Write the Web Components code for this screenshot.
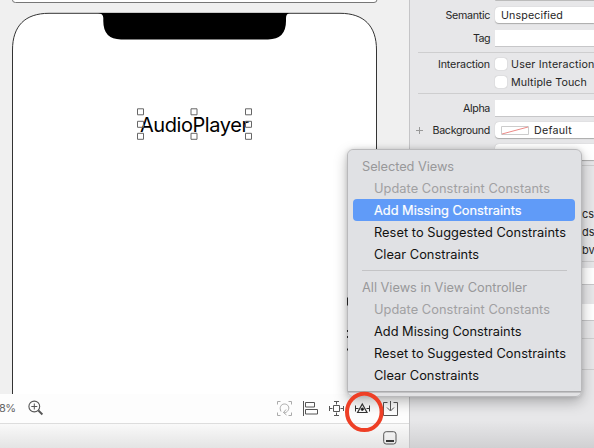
<!DOCTYPE html>
<html lang="en"><head><meta charset="utf-8"><title>Interface Builder</title>
<style>html,body{margin:0;width:594px;height:448px;overflow:hidden;font-family:Inter,"Liberation Sans",sans-serif}</style></head>
<body><ib-window></ib-window>
<script>
function define(name, html, init){
  customElements.define(name, class extends HTMLElement{
    connectedCallback(){
      if(this.shadowRoot) return;
      const t=document.createElement('template'); t.innerHTML=html;
      this.attachShadow({mode:'open'}).append(t.content.cloneNode(true));
      if(init) init(this,this.shadowRoot);
    }
  });
}
/* Text whose tracking is adjusted to span a given width */
define('fit-text','<style>:host{display:inline-block;white-space:pre}</style><span><slot></slot></span>',(h,r)=>{
  const w=+h.getAttribute('w'); if(!w) return;
  const s=r.querySelector('span');
  const n=h.textContent.length;
  s.style.letterSpacing=((w-s.getBoundingClientRect().width)/n)+'px';
});
define('ib-device',`<style>:host{display:block;position:relative;height:394px;background:#f0f0f0;overflow:hidden}
svg{position:absolute;inset:0}
fit-text{position:absolute;left:140px;top:111px;font-size:20px;font-weight:380;line-height:28px;color:#000}</style>
<svg width="409" height="394" fill="none">
<path d="M12.500-4V0q0 2.500 3 2.500H374q3 0 3-3V-4" fill="#fff" stroke="#777"/>
<path d="M12.500 396V50C12.500 26 25 13.300 49 13.300H340C364 13.300 376.500 26 376.500 50V396" fill="#fff" stroke="#333" stroke-width="1"/>
<path d="M98 13H290Q286 13.600 286 18V21Q286 39.400 268 39.400H121Q103.300 39.400 103.300 21V18Q103.300 13.600 98 13Z" fill="#000"/></svg>
<fit-text w="108.500">AudioPlayer</fit-text>
<svg width="409" height="394" fill="#fff" stroke="#666" stroke-width="1"><path d="M137.500 108.800h6v6h-6zM191 108.800h6v6h-6zM245.500 108.800h6v6h-6zM137.500 133.300h6v6h-6zM191 133.300h6v6h-6zM245.500 133.300h6v6h-6z"/><path fill="none" d="M137.500 121.300h6v6h-6zM245.500 121.300h6v6h-6z"/></svg>`);
define('ib-toolbar',`<style>:host{display:flex;height:30px;box-sizing:border-box;padding-bottom:1px;background:#fdfdfd;border-bottom:1px solid #ddd;align-items:center}
.p{font-size:11px;color:#666;width:28px;margin-left:-1px}.sp{flex:1}.icons{display:flex;margin-right:9px}svg{display:block;fill:none;stroke:#555;stroke-width:1}</style>
<span class="p"><fit-text w="16.500">8%</fit-text></span>
<svg width="18" height="18" style="margin-left:-1px"><g stroke="#555"><circle cx="8.300" cy="7.500" r="5.400" stroke-width="1.100"/><path d="M5.300 7.500h6M8.300 4.500v6"/><path d="M12.400 11.500l4 4" stroke-width="1.800"/></g></svg>
<span class="sp"></span><div class="icons"><svg width="124" height="20" viewBox="276 398 124 20">
<g stroke="#aaa"><path d="M277.500 404.500v-3h3M288.500 401.500h3v3M277.500 412.500v3h3M288.500 415.500h3v-3"/><path d="M281 411.500c-2-4 0-7.500 3.500-7.500s5.500 3.500 3.500 6.500-4.500 2-4.500 2M286 409.500l-2.500 3 3 2.500"/></g>
<path d="M303.500 401v15M305.500 402.500h9v4.500h-9zM305.500 409.500h12v4.500h-12z"/>
<path d="M333.500 405.500h6v6h-6zM336.500 401.500v3M334 401.500h5M336.500 412.500v3M334 415.500h5M329.500 406v5M329.500 408.500h3M343.500 406v5M343.500 408.500h-3"/>
<g stroke="#333"><path d="M362.300 404l4.700 8.500h-9.400z" stroke-width="1.200"/><path d="M355.500 405.500v6M355.500 408.500h3M369.500 405.500v6M369.500 408.500h-3"/><circle cx="362.300" cy="409.200" r="1.200" fill="#111"/></g>
<path d="M387.500 402.500h-4v13h14v-13h-4M390.500 401v9.500M387 407.500l3.500 3.500 3.500-3.500"/></svg></div>`);
define('ib-debugbar',`<style>:host{display:flex;justify-content:flex-end;align-items:flex-start;height:24px;background:linear-gradient(#f9f9f9,#e4e4e4)}svg{margin:7px 12px 0 0}</style>
<svg width="14" height="14" fill="none" stroke="#555"><rect x=".7" y=".7" width="12.300" height="12.300" rx="2.500"/><path d="M3 10h8" stroke="#333" stroke-width="2"/></svg>`);
define('attr-row',`<style>:host{display:grid;grid-template-columns:80px 1fr;column-gap:5px;align-items:center;font-size:10.700px;color:#262626;height:18px}
.l{text-align:right;white-space:nowrap}.f{display:flex;align-items:center;height:17px;box-sizing:border-box;white-space:nowrap;background:#fff;border-bottom:1px solid #c7c7c9}
:host([pop]) .f{height:16px;border-radius:4px 0 0 4px;padding-left:6px;box-shadow:0 .5px 1px #aaa;border:0}
:host([check]) .f{background:none;border:0;gap:4px}
i{display:none}:host([check]) i{display:block;width:12px;height:12px;background:#fff;border-radius:3px;box-shadow:0 0 1px #999}</style>
<span class="l"><slot name="label"></slot></span><div class="f"><i></i><slot></slot></div>`);
define('ib-inspector',`<style>:host{display:block;box-sizing:border-box;position:relative;overflow:hidden;background:#e7e7e9;border-left:1px solid #c5c5c7;height:448px}
.rows{display:flex;flex-direction:column;width:184px}
hr{border:0;height:1px;background:#cececf;margin:0 0 0 8px;width:176px;flex:none}
.top{height:1px;margin:0 0 5px 85px;background:#bbb;border-radius:0 0 0 4px}
.bg{position:relative}.plus{position:absolute;left:5px;top:5px;width:9px;height:9px}
.swatch{margin-right:5px}.tail{display:flex;flex-direction:column;margin-top:39px;margin-left:172px;font-size:11px;line-height:18px;color:#262626}
.half{height:17px;background:#fff;border-bottom:1px solid #c7c7c9;box-sizing:border-box;margin-left:85px}
.shade{position:absolute;inset:370px 0 0 0;background:linear-gradient(transparent 65%,#d0d0d2)}</style>
<div class="rows"><div class="top"></div>
<attr-row pop style="margin-top:0"><fit-text slot="label" w="44.500">Semantic</fit-text><fit-text w="62">Unspecified</fit-text></attr-row>
<attr-row style="margin-top:5.500px"><fit-text slot="label" w="17">Tag</fit-text></attr-row>
<hr style="margin-top:4.500px"><attr-row check style="margin-top:2px"><fit-text slot="label" w="52">Interaction</fit-text><fit-text w="83.500">User Interaction</fit-text></attr-row>
<attr-row check><fit-text w="76">Multiple Touch</fit-text></attr-row>
<hr style="margin-top:2px"><attr-row style="margin-top:5.500px"><fit-text slot="label" w="27">Alpha</fit-text></attr-row>
<div class="bg" style="margin-top:3.500px"><svg class="plus" viewBox="0 0 9 9"><path d="M4.500 1v7M1 4.500h7" stroke="#999"/></svg>
<attr-row pop><fit-text slot="label" w="57.500">Background</fit-text><svg class="swatch" width="28" height="9"><path d="M.5.5h27v8H.5z" fill="#fff" stroke="#ccc"/><path d="M1 8L27 1" stroke="#eb8a87"/></svg><fit-text w="38">Default</fit-text></attr-row></div>
<attr-row pop style="margin-top:4px"></attr-row>
<hr style="margin-top:4px">
<div class="tail"><span>cs</span><span>ds</span><span>bv</span></div>
<hr style="margin-top:2px"><div class="half" style="margin-top:6px"></div><div class="half" style="margin-top:19px"></div><hr style="margin-top:17px"><hr style="margin-top:30px"></div>
<div class="shade"></div>`);
define('menu-item',`<style>:host{display:flex;align-items:center;height:22px;padding-left:21px;margin:0 7px 0 5px;border-radius:4px;font-size:12.800px;color:#111;white-space:nowrap}
:host([disabled]){color:#a0a0a2}:host([header]){padding-left:9px;color:#98989a}:host([selected]){background:#609bf8;color:#fff;-webkit-text-stroke:.2px #fff}</style><slot></slot>`);
define('context-menu',`<style>:host{display:block;box-sizing:border-box}
.back{box-sizing:border-box;width:235px;height:248px;border:1px solid #b9b9bb;border-radius:6px;background:linear-gradient(#e0e1e4 0 241px,#aaaaac 241px 242px,#c2c2c4 242px 243px,#e2e2e4 243px);box-shadow:0 5px 14px #0004,0 0 5px #0002}
.front{height:240px;width:231px;box-sizing:border-box;padding-top:5px;background:#e0e1e4;border-radius:6px 6px 6px 4px}
menu-item{margin-right:4px}.sep{height:1px;background:#c4c4c6;margin:5px 12px 5px 14px}</style>
<div class="back"><div class="front">
<menu-item header><fit-text w="92">Selected Views</fit-text></menu-item>
<menu-item disabled><fit-text w="176">Update Constraint Constants</fit-text></menu-item>
<menu-item selected><fit-text w="147.500">Add Missing Constraints</fit-text></menu-item>
<menu-item><fit-text w="192">Reset to Suggested Constraints</fit-text></menu-item>
<menu-item><fit-text w="105">Clear Constraints</fit-text></menu-item>
<div class="sep"></div>
<menu-item header><fit-text w="165">All Views in View Controller</fit-text></menu-item>
<menu-item disabled><fit-text w="176">Update Constraint Constants</fit-text></menu-item>
<menu-item><fit-text w="147.500">Add Missing Constraints</fit-text></menu-item>
<menu-item><fit-text w="192">Reset to Suggested Constraints</fit-text></menu-item>
<menu-item><fit-text w="105">Clear Constraints</fit-text></menu-item>
</div></div>`);
define('ib-window',`<style>:host{display:grid;grid-template-columns:409px 185px;width:594px;height:448px;position:relative;overflow:hidden}
context-menu{position:absolute;left:347px;top:149px}.over{position:absolute;inset:0}</style>
<main><ib-device></ib-device><ib-toolbar></ib-toolbar><ib-debugbar></ib-debugbar></main>
<ib-inspector></ib-inspector><context-menu></context-menu>
<svg class="over" width="594" height="448" fill="none"><path d="M347.500 297.500v8M347.500 330v2M347.500 336v2M347.500 348.500v2" stroke="#222"/><ellipse cx="364.300" cy="411.900" rx="17.300" ry="18.200" stroke="#ee3f26" stroke-width="4"/></svg>`);
</script></body></html>
